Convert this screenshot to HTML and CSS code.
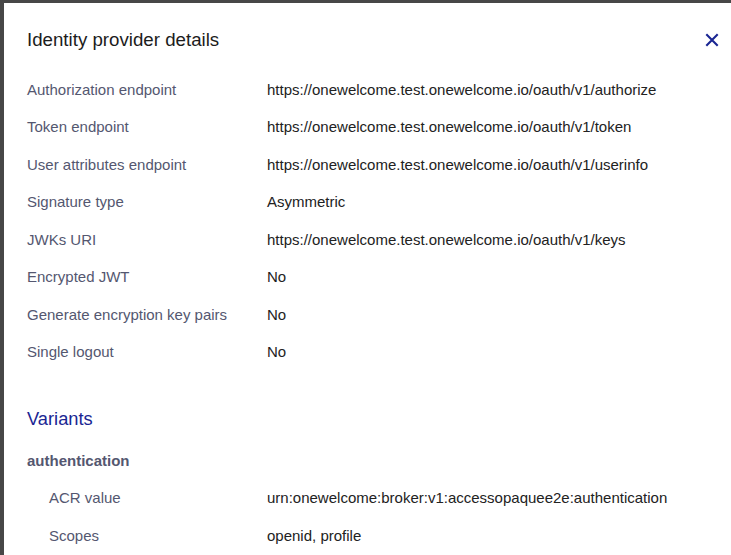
FILE: index.html
```html
<!DOCTYPE html>
<html lang="en">
<head>
<meta charset="utf-8">
<title>Identity provider details</title>
<link rel="stylesheet" href="styles.css">
</head>
<body>
<div class="modal" role="dialog" aria-labelledby="modal-title">
  <header class="modal-header">
    <h2 id="modal-title" class="modal-title">Identity provider details</h2>
    <button class="close-btn" aria-label="Close">
      <svg width="24" height="24" viewBox="0 0 24 24" aria-hidden="true">
        <path d="M6.3 6.3 L17.7 17.7 M17.7 6.3 L6.3 17.7" stroke="currentColor" stroke-width="2.1" fill="none"/>
      </svg>
    </button>
  </header>
  <div class="modal-body">
    <div class="content">
      <dl class="details">
        <div class="row"><dt>Authorization endpoint</dt><dd>https://onewelcome.test.onewelcome.io/oauth/v1/authorize</dd></div>
        <div class="row"><dt>Token endpoint</dt><dd>https://onewelcome.test.onewelcome.io/oauth/v1/token</dd></div>
        <div class="row"><dt>User attributes endpoint</dt><dd>https://onewelcome.test.onewelcome.io/oauth/v1/userinfo</dd></div>
        <div class="row"><dt>Signature type</dt><dd>Asymmetric</dd></div>
        <div class="row"><dt>JWKs URI</dt><dd>https://onewelcome.test.onewelcome.io/oauth/v1/keys</dd></div>
        <div class="row"><dt>Encrypted JWT</dt><dd>No</dd></div>
        <div class="row"><dt>Generate encryption key pairs</dt><dd>No</dd></div>
        <div class="row"><dt>Single logout</dt><dd>No</dd></div>
      </dl>
      <h3 class="section-title">Variants</h3>
      <h4 class="variant-name">authentication</h4>
      <dl class="details nested">
        <div class="row"><dt>ACR value</dt><dd>urn:onewelcome:broker:v1:accessopaquee2e:authentication</dd></div>
        <div class="row"><dt>Scopes</dt><dd>openid, profile</dd></div>
      </dl>
    </div>
  </div>
</div>
</body>
</html>
```

FILE: styles.css
```css
html, body {
  margin: 0;
  padding: 0;
  height: 100%;
}

body {
  background: #474747;
  font-family: "Liberation Sans", Arial, sans-serif;
  overflow: hidden;
}

.modal {
  margin: 3px 0 0 4px;
  height: calc(100vh - 3px);
  background: #ffffff;
  display: flex;
  flex-direction: column;
  overflow: hidden;
}

.modal-header {
  display: flex;
  align-items: center;
  justify-content: space-between;
  height: 54px;
  box-sizing: border-box;
  padding: 20px 7px 0 23px;
  flex-shrink: 0;
}

.modal-title {
  margin: 0;
  font-size: 18.7px;
  font-weight: 400;
  color: #1c1c1c;
  line-height: 24px;
}

.close-btn {
  width: 24px;
  height: 24px;
  padding: 0;
  border: 0;
  background: transparent;
  color: #1a2693;
  display: flex;
  align-items: center;
  justify-content: center;
  cursor: pointer;
}

.modal-body {
  flex: 1;
  overflow: hidden;
  padding: 14.25px 23px 0;
}

.details {
  margin: 0;
}

.row {
  display: grid;
  grid-template-columns: 240px 1fr;
  padding: 7.5px 0;
  font-size: 15px;
  line-height: 22.5px;
}

.row dt {
  color: #545770;
}

.row dd {
  margin: 0;
  color: #222222;
  white-space: nowrap;
}

.nested .row dt {
  padding-left: 22px;
}

.section-title {
  margin: 36px 0 0;
  font-size: 18.3px;
  font-weight: 400;
  line-height: 24px;
  color: #1a2693;
}

.variant-name {
  margin: 18.75px 0 7px;
  font-size: 15px;
  font-weight: 700;
  line-height: 22.5px;
  color: #545770;
}
```
